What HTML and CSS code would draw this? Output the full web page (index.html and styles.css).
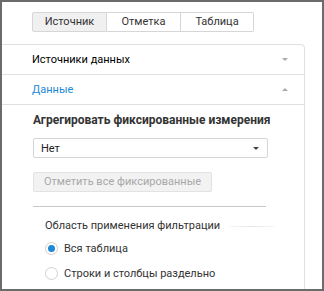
FILE: index.html
```html
<!DOCTYPE html>
<html lang="ru">
<head>
    <meta charset="UTF-8">
    <title>Источник</title>
    <link rel="stylesheet" href="styles.css">
</head>
<body>
    <div class="window">
        <div class="tabs">
            <span class="tab on">Источник</span>
            <span class="tab">Отметка</span>
            <span class="tab">Таблица</span>
        </div>
        <div class="panel">
            <div class="head">
                <span>Источники данных</span>
                <i class="arr down"></i>
            </div>
            <div class="head open">
                <span>Данные</span>
                <i class="arr up"></i>
            </div>
            <div class="body">
                <p class="title">Агрегировать фиксированные измерения</p>
                <div class="select">
                    <span>Нет</span>
                    <i class="caret"></i>
                </div>
                <div class="btn-off">Отметить все фиксированные</div>
                <div class="sep"></div>
                <div class="group">
                    <p class="legend">Область применения фильтрации</p>
                    <label class="radio on"><i></i>Вся таблица</label>
                    <label class="radio"><i></i>Строки и столбцы раздельно</label>
                </div>
            </div>
        </div>
    </div>
</body>
</html>
```

FILE: styles.css
```css
body,p{ margin: 0;}
body{
    font-family: Roboto, "Liberation Sans", sans-serif;
    font-size: 11px;
    color: #000;
}
.window{
    width: 324px;
    height: 291px;
    box-sizing: border-box;
    border: 2px solid #6b6b6b;
    background: #fff;
    overflow: hidden;
}
.tabs{
    display: flex;
    margin: 10px 0 0 30px;
}
.tab{
    width: 73px;
    height: 18px;
    line-height: 18px;
    text-align: center;
    border: 1px solid #d6d6d6;
    border-left: none;
    color: #333;
}
.tab:first-child{
    border-left: 1px solid #d6d6d6;
    border-radius: 2px 0 0 2px;
}
.tab:last-child{
    width: 72px;
    border-radius: 0 2px 2px 0;
}
.tab.on{
    background: #f0f0f0;
}
.panel{
    margin: 12px 0 0 -10px;
    width: 311px;
    height: 300px;
    border: 1px solid #e0e0e0;
    border-radius: 0 4px 0 0;
}
.head{
    display: flex;
    align-items: center;
    justify-content: space-between;
    height: 29px;
    padding: 0 16px 0 39px;
    border-bottom: 1px solid #e0e0e0;
}
.head.open{
    color: #1e8ad6;
}
.arr{
    width: 0;
    height: 0;
    border-left: 3px solid transparent;
    border-right: 3px solid transparent;
}
.arr.down{
    border-top: 3px solid #aaa;
}
.arr.up{
    border-bottom: 3px solid #aaa;
}
.body{
    padding: 8px 0 0 40px;
}
.title{
    font-size: 12px;
    font-weight: bold;
    color: #333;
    line-height: 15px;
}
.select{
    display: flex;
    align-items: center;
    justify-content: space-between;
    width: 233px;
    height: 18px;
    margin-top: 10px;
    border: 1px solid #d6d6d6;
    border-radius: 2px;
}
.select span{
    padding-left: 7px;
    color: #222;
}
.caret{
    width: 0;
    height: 0;
    margin-right: 8px;
    border-left: 3px solid transparent;
    border-right: 3px solid transparent;
    border-top: 3px solid #444;
}
.btn-off{
    width: 177px;
    height: 18px;
    line-height: 18px;
    margin-top: 14px;
    text-align: center;
    white-space: nowrap;
    color: #a8a8a8;
    background: #f2f2f2;
    border: 1px solid #e2e2e2;
    border-radius: 2px;
}
.sep{
    width: 233px;
    height: 1px;
    margin-top: 14px;
    background: #c8c8c8;
}
.group{
    padding: 11px 0 0 12px;
}
.legend{
    display: flex;
    align-items: center;
    color: #333;
    line-height: 16px;
}
.legend::after{
    content: "";
    flex: none;
    width: 48px;
    height: 1px;
    margin-left: 8px;
    background: linear-gradient(to right, #fafafa, #e4e4e4, #fafafa);
}
.radio{
    display: flex;
    align-items: center;
    height: 16px;
    margin-top: 6px;
    color: #333;
}
.radio + .radio{
    margin-top: 9px;
}
.radio i{
    width: 13px;
    height: 13px;
    margin-right: 6px;
    border: 1px solid #d0d0d0;
    border-radius: 50%;
    box-sizing: border-box;
    display: flex;
    align-items: center;
    justify-content: center;
}
.radio.on i::after{
    content: "";
    width: 7px;
    height: 7px;
    border-radius: 50%;
    background: #1e88d6;
}
```
